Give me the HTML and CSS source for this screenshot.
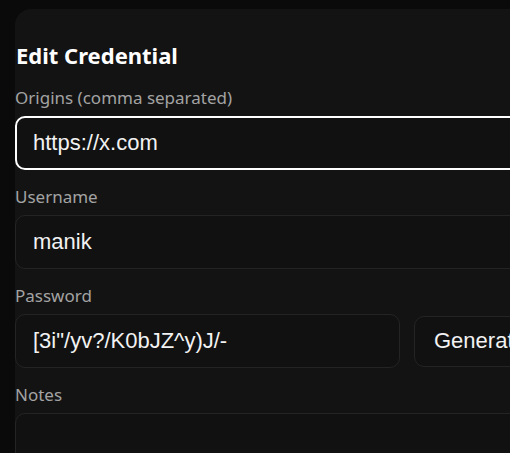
FILE: index.html
```html
<!DOCTYPE html>
<html>
<head>
<meta charset="utf-8">
<link rel="stylesheet" href="styles.css">
</head>
<body>
<div class="card">
  <h2 class="title">Edit Credential</h2>
  <label class="label">Origins (comma separated)</label>
  <div class="field focused">https://x.com</div>
  <label class="label">Username</label>
  <div class="field">manik</div>
  <label class="label">Password</label>
  <div class="pw-row">
    <div class="field"><span class="pw">[3i"/yv?/K0bJZ^y)J/-</span></div>
    <button class="btn">Generate</button>
  </div>
  <label class="label">Notes</label>
  <div class="field notes"></div>
</div>
</body>
</html>
```
FILE: styles.css
```css
html, body {
  margin: 0;
  padding: 0;
  background: #0a0a0a;
  overflow: hidden;
  height: 453px;
}
.card {
  margin: 9px 0 0 15px;
  width: 620px;
  height: 600px;
  background: #131313;
  border-radius: 16px;
  padding: 31px 0 0 0;
  box-sizing: border-box;
  font-family: "Noto Sans", "Open Sans", sans-serif;
}
.title {
  margin: 0 0 0 1px;
  font-size: 22px;
  line-height: 30px;
  font-weight: 700;
  color: #ffffff;
}
.label {
  display: block;
  font-size: 17px;
  line-height: 23px;
  color: #a3a3a3;
  margin: 15px 0 7px 0;
}
.title + .label { margin-top: 16px; }
.field {
  box-sizing: border-box;
  height: 54px;
  width: 560px;
  border: 1px solid #242424;
  border-radius: 10px;
  background: #111111;
  color: #f2f2f2;
  font-family: "Liberation Sans", Arial, sans-serif;
  font-size: 22px;
  line-height: 52px;
  padding: 0 17px;
  white-space: nowrap;
}
.field.focused {
  border: 2px solid #ffffff;
  line-height: 50px;
  padding: 0 16px;
}
.pw-row {
  display: flex;
  align-items: center;
  gap: 14px;
}
.pw-row .field {
  width: 385px;
  flex: none;
}
.btn {
  flex: none;
  box-sizing: border-box;
  height: 51px;
  padding: 0 19px;
  border: 1px solid #242424;
  border-radius: 10px;
  background: #111111;
  color: #f2f2f2;
  font-family: "Liberation Sans", Arial, sans-serif;
  font-size: 22px;
}
.notes { height: 90px; }
```
